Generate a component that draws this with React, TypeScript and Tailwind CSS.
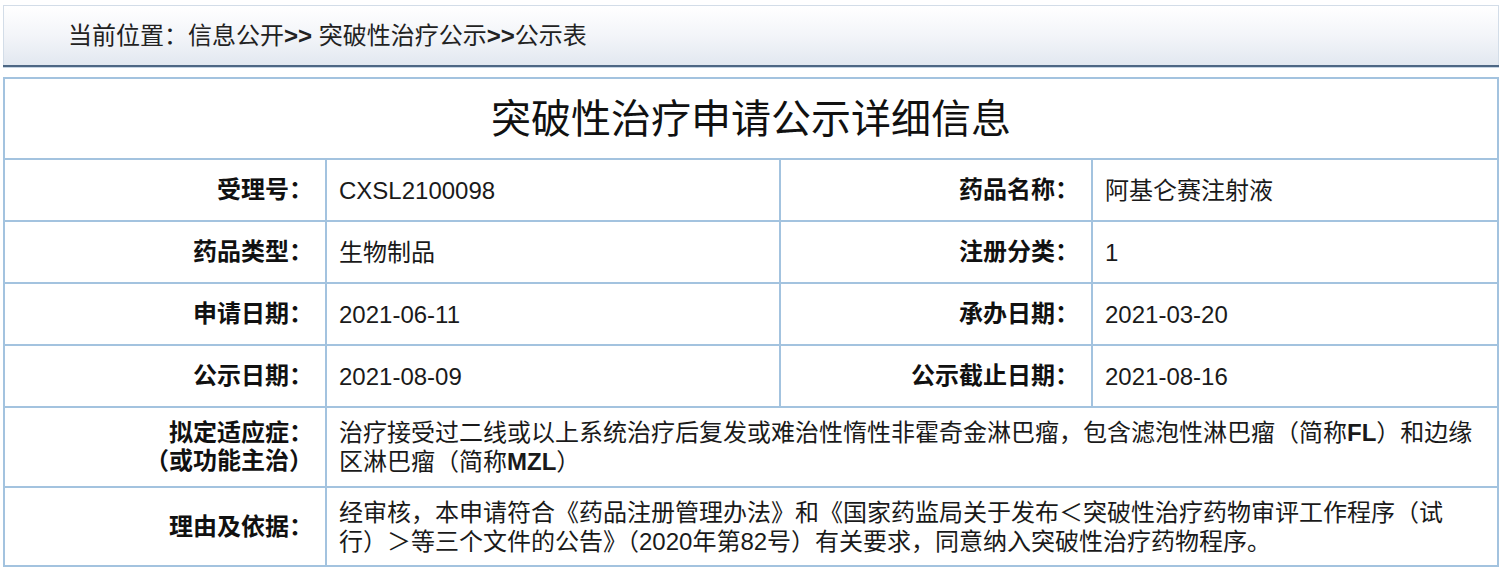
const font = { fontFamily: '"Liberation Sans", "Noto Sans CJK SC", sans-serif' };

type Row = { label: string; value: React.ReactNode; label2: string; value2: React.ReactNode };

const rows: Row[] = [
  { label: "受理号：", value: "CXSL2100098", label2: "药品名称：", value2: "阿基仑赛注射液" },
  { label: "药品类型：", value: "生物制品", label2: "注册分类：", value2: "1" },
  { label: "申请日期：", value: "2021-06-11", label2: "承办日期：", value2: "2021-03-20" },
  { label: "公示日期：", value: "2021-08-09", label2: "公示截止日期：", value2: "2021-08-16" },
];

function LabelCell({ children, h }: { children: React.ReactNode; h: string }) {
  return (
    <td className={`border-2 border-[#a3c3df] ${h} pr-3 text-right align-middle text-[24px] font-bold leading-[28px] text-[#111]`}>
      {children}
    </td>
  );
}

function ValueCell({ children, colSpan }: { children: React.ReactNode; colSpan?: number }) {
  return (
    <td colSpan={colSpan} className="border-2 border-[#a3c3df] pl-3 pr-3 align-middle text-[24px] leading-[29px] text-[#1a1a1a]">
      {children}
    </td>
  );
}

export default function App() {
  return (
    <div style={font} className="min-h-[571px] w-[1502px] bg-white px-[3px] pt-[5px]">
      <div className="flex h-[60px] items-center border border-b-0 border-[#d3dde8] bg-gradient-to-b from-white via-[#f3f5f9] to-[#e2e8f0] pl-16">
        <span className="text-[24px] leading-none text-[#222]">
          当前位置：信息公开<b>&gt;&gt;</b> 突破性治疗公示<b>&gt;&gt;</b>公示表
        </span>
      </div>
      <div className="h-[2px] bg-[#4d6784]" />
      <div className="h-[1px] bg-[#c6d4e2]" />
      <div className="h-[9px]" />
      <table className="w-[1494px] table-fixed border-collapse">
        <colgroup>
          <col className="w-[322px]" />
          <col className="w-[454px]" />
          <col className="w-[312px]" />
          <col className="w-[406px]" />
        </colgroup>
        <tbody>
          <tr>
            <td colSpan={4} className="h-[81px] border-2 border-[#a3c3df] text-center align-middle text-[40px] leading-none text-[#111]">
              突破性治疗申请公示详细信息
            </td>
          </tr>
          {rows.map((r) => (
            <tr key={r.label}>
              <LabelCell h="h-[62px]">{r.label}</LabelCell>
              <ValueCell>{r.value}</ValueCell>
              <LabelCell h="h-[62px]">{r.label2}</LabelCell>
              <ValueCell>{r.value2}</ValueCell>
            </tr>
          ))}
          <tr>
            <LabelCell h="h-[80px]">
              拟定适应症：
              <br />
              （或功能主治）
            </LabelCell>
            <ValueCell colSpan={3}>
              治疗接受过二线或以上系统治疗后复发或难治性惰性非霍奇金淋巴瘤，包含滤泡性淋巴瘤（简称<b>FL</b>）和边缘
              <br />
              区淋巴瘤（简称<b>MZL</b>）
            </ValueCell>
          </tr>
          <tr>
            <LabelCell h="h-[79px]">理由及依据：</LabelCell>
            <ValueCell colSpan={3}>
              经审核，本申请符合《药品注册管理办法》和《国家药监局关于发布＜突破性治疗药物审评工作程序（试
              <br />
              行）＞等三个文件的公告》（2020年第82号）有关要求，同意纳入突破性治疗药物程序。
            </ValueCell>
          </tr>
        </tbody>
      </table>
    </div>
  );
}
